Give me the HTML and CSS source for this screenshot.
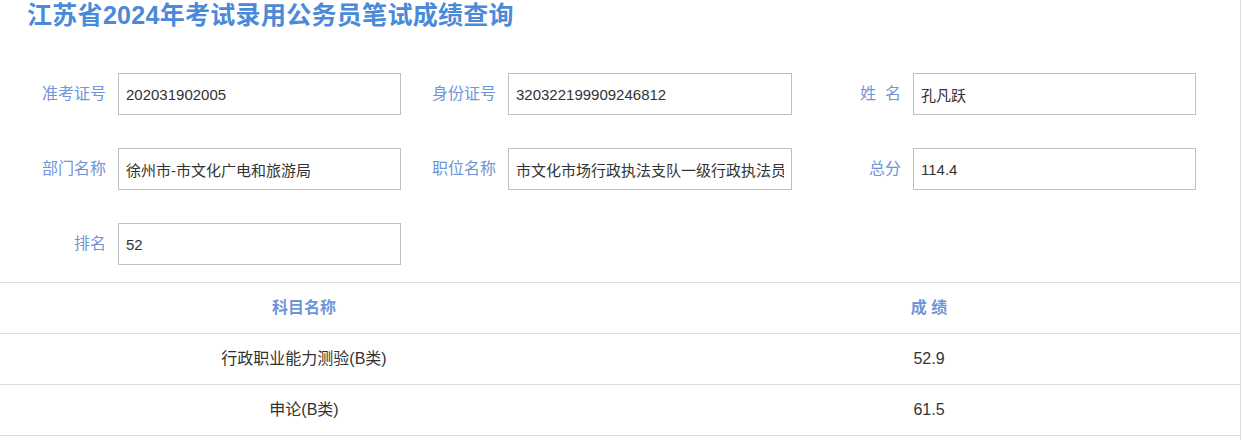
FILE: index.html
```html
<!DOCTYPE html>
<html lang="zh-CN">
<head>
    <meta charset="UTF-8">
    <meta name="viewport" content="width=device-width, initial-scale=1.0">
    <title>江苏省2024年考试录用公务员笔试成绩查询</title>
    <link rel="stylesheet" href="styles.css">
</head>
<body>
    <div class="container">
        <h1>江苏省2024年考试录用公务员笔试成绩查询</h1>

        <div class="info-form">
            <label class="info-label">准考证号</label>
            <input class="info-input" type="text" value="202031902005" readonly>
            <label class="info-label">身份证号</label>
            <input class="info-input" type="text" value="320322199909246812" readonly>
            <label class="info-label">姓&nbsp;&nbsp;名</label>
            <input class="info-input" type="text" value="孔凡跃" readonly>

            <label class="info-label">部门名称</label>
            <input class="info-input" type="text" value="徐州市-市文化广电和旅游局" readonly>
            <label class="info-label">职位名称</label>
            <input class="info-input" type="text" value="市文化市场行政执法支队一级行政执法员" readonly>
            <label class="info-label">总分</label>
            <input class="info-input" type="text" value="114.4" readonly>

            <label class="info-label">排名</label>
            <input class="info-input" type="text" value="52" readonly>
        </div>

        <table class="score-table">
            <thead>
                <tr>
                    <th class="col-name">科目名称</th>
                    <th class="col-score">成 绩</th>
                </tr>
            </thead>
            <tbody>
                <tr>
                    <td class="col-name">行政职业能力测验(B类)</td>
                    <td class="col-score">52.9</td>
                </tr>
                <tr>
                    <td class="col-name">申论(B类)</td>
                    <td class="col-score">61.5</td>
                </tr>
            </tbody>
        </table>
    </div>
</body>
</html>
```

FILE: styles.css
```css
* {
    margin: 0;
    padding: 0;
    box-sizing: border-box;
    font-family: "Liberation Sans", "Noto Sans CJK SC", sans-serif;
}

body {
    background-color: #fff;
}

.container {
    width: 1241px;
    min-height: 100vh;
    border-right: 1px solid #ddd;
}

h1 {
    font-size: 25px;
    line-height: 30px;
    font-weight: bold;
    letter-spacing: 0.3px;
    color: #4a8ad9;
    padding-left: 27px;
}

.info-form {
    display: grid;
    grid-template-columns: 106px 283px 83px 284px 97px 283px;
    grid-auto-rows: 42px;
    column-gap: 12px;
    row-gap: 33px;
    margin-top: 43px;
    padding-bottom: 17px;
    border-bottom: 1px solid #ddd;
}

.info-label {
    font-size: 16px;
    color: #6f95d8;
    text-align: right;
    line-height: 42px;
    white-space: nowrap;
}

.info-input {
    width: 100%;
    height: 42px;
    border: 1px solid #bfbfbf;
    padding: 0 7px;
    font-size: 15px;
    color: #333;
    background-color: #fff;
    outline: none;
}

.score-table {
    width: 1240px;
    border-collapse: collapse;
}

.score-table th,
.score-table td {
    line-height: 50px;
    text-align: center;
    border-bottom: 1px solid #ddd;
    font-size: 16px;
    color: #333;
    font-weight: normal;
}

.score-table th {
    font-weight: bold;
    color: #6f95d8;
}

.col-name {
    width: 608px;
}

.col-score {
    padding-left: 10px;
}
```
